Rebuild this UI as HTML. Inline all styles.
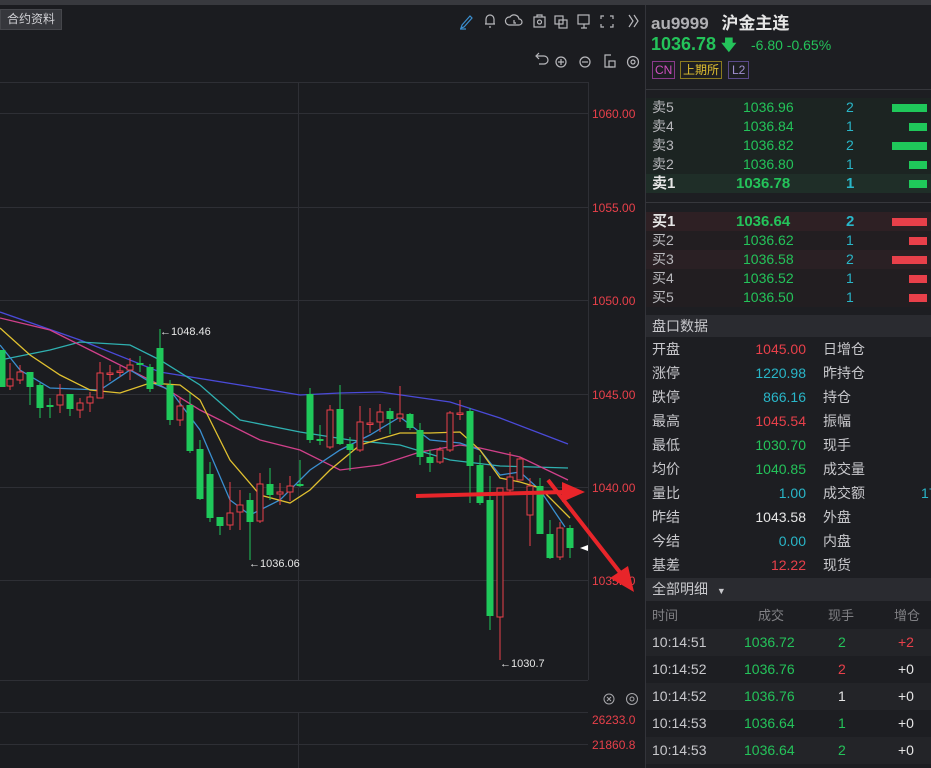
<!DOCTYPE html>
<html><head><meta charset="utf-8"><style>
*{margin:0;padding:0;box-sizing:border-box}
body{width:931px;height:768px;overflow:hidden;background:#1b1c20;font-family:"Liberation Sans","Noto Sans CJK SC",sans-serif;color:#c8c8cc;position:relative}
.a{position:absolute;white-space:nowrap}
.g{color:#24c35a}.r{color:#e8404a}.c{color:#29b6c8}.w{color:#e6e6e6}.gr{color:#b8b8bc}
#rp{position:absolute;left:645px;top:5px;width:286px;height:763px;background:#1d1e22;border-left:1px solid #33343a}
.row{position:absolute;left:0;width:286px;height:19px;font-size:14px;line-height:19px}
.row span{position:absolute}
.bar{position:absolute;height:8px;top:6px;right:5px}
.dr{position:absolute;left:0;width:286px;height:24px;font-size:14px;line-height:24px}
.dr span{position:absolute}
.tr{position:absolute;left:0;width:286px;height:27px;font-size:14px;line-height:27px}
.tr span{position:absolute}
</style></head><body>
<div class="a" style="left:0;top:0;width:931px;height:5px;background:#38393e"></div>
<div class="a" style="left:0;top:9px;width:62px;height:21px;background:#36373c;border:1px solid #45464b;font-size:12px;line-height:19px;padding-left:6px;color:#d0d0d4">合约资料</div>
<svg class="a" style="left:455px;top:5px" width="190" height="70" fill="none" stroke="#b8b8bc" stroke-width="1.2">
<path d="M7 20 L15 11 L17 13 L9 22 L6 23 Z M5 24 H11" stroke="#3a8fd0"/>
<path d="M31 19 V14 a4 4 0 0 1 8 0 V19 H30 H40 M34 22 h2"/>
<path d="M54 20 a4 4 0 0 1 1-8 a5 5 0 0 1 9 2 a3 3 0 0 1 0 6 Z M59 15 v3 h2"/>
<rect x="79" y="12" width="11" height="10"/><path d="M82 12 v-2 h5 v2"/><circle cx="84.5" cy="17" r="2"/>
<rect x="100" y="11" width="8" height="8"/><rect x="104" y="15" width="8" height="8"/>
<rect x="123" y="10" width="11" height="9"/><path d="M126 23 h6 M129 19 v4"/>
<path d="M146 14 v-3 h3 M155 11 h3 v3 M158 19 v3 h-3 M149 22 h-3 v-3"/>
<path d="M174 10 l4 6 l-4 6 M179 10 l4 6 l-4 6"/>
<path d="M84 59 h5 a4 4 0 0 0 0-8 h-7 M84 48 l-3 3 l3 3"/>
<circle cx="106" cy="57" r="5"/><path d="M103 57 h6 M106 54 v6"/>
<circle cx="130" cy="57" r="5"/><path d="M127 57 h6"/>
<path d="M158 62 h-8 v-12 h6"/><rect x="154" y="56" width="6" height="6"/>
<circle cx="178" cy="57" r="5.5"/><circle cx="178" cy="57" r="2"/>
</svg>
<svg class="a" style="left:0;top:0" width="645" height="768">
<g stroke="#2e2f35" stroke-width="1">
<line x1="0" y1="82.5" x2="588" y2="82.5"/>
<line x1="0" y1="113.5" x2="588" y2="113.5"/><line x1="0" y1="207.5" x2="588" y2="207.5"/><line x1="0" y1="300.5" x2="588" y2="300.5"/><line x1="0" y1="394.5" x2="588" y2="394.5"/><line x1="0" y1="487.5" x2="588" y2="487.5"/><line x1="0" y1="580.5" x2="588" y2="580.5"/>
<line x1="0" y1="680.5" x2="588" y2="680.5"/>
<line x1="298.5" y1="82" x2="298.5" y2="680"/>
<line x1="588.5" y1="82" x2="588.5" y2="680"/>
<line x1="0" y1="712.5" x2="588" y2="712.5"/><line x1="0" y1="744.5" x2="588" y2="744.5"/>
<line x1="298.5" y1="712" x2="298.5" y2="768"/>
</g>
<g font-size="12" fill="#e8404a" font-family="Liberation Sans">
<text x="592" y="118">1060.00</text><text x="592" y="212">1055.00</text><text x="592" y="305">1050.00</text><text x="592" y="399">1045.00</text><text x="592" y="492">1040.00</text><text x="592" y="585">1035.00</text>
<text x="592" y="724">26233.0</text><text x="592" y="749">21860.8</text>
</g>
<g fill="none" stroke="#a8a8ac" stroke-width="1"><circle cx="609" cy="699" r="5"/><path d="M607 697 l4 4 M611 697 l-4 4"/><circle cx="632" cy="699" r="5.5"/><circle cx="632" cy="699" r="2"/></g>
<g fill="none" stroke-width="1.3">
<polyline stroke="#4a4ad8" points="0,312 80,340 160,372 240,385 300,395 340,393 380,392 450,402 500,418 568,444"/>
<polyline stroke="#2fb0b0" points="0,360 50,350 80,342 130,345 160,360 200,385 240,420 300,432 350,440 400,445 450,460 500,466 568,468"/>
<polyline stroke="#d0408a" points="0,318 50,330 100,355 160,385 200,410 260,440 300,450 340,470 380,465 420,452 460,445 480,448 520,457 568,480"/>
<polyline stroke="#3a8fd0" points="0,345 20,370 50,388 100,390 130,370 150,382 170,390 200,430 230,500 250,515 280,500 310,470 340,450 370,435 400,417 430,440 460,443 480,450 500,475 520,472 540,490 565,527"/>
<polyline stroke="#e0c030" points="0,328 30,355 60,375 90,390 120,393 150,383 180,385 200,400 230,460 260,495 290,503 310,490 330,470 360,445 400,433 430,433 460,432 480,450 500,478 520,482 540,488 570,518"/>
</g>
<g id="cd"></g>
<g font-size="11" fill="#e6e6e6"><text x="160" y="335">←1048.46</text><text x="249" y="567">←1036.06</text><text x="500" y="667">←1030.7</text></g>
<polygon points="580,548 588,545 588,551" fill="#fff"/>
<g fill="#e8252a" stroke="#e8252a">
<line x1="416" y1="496" x2="565" y2="492" stroke-width="4"/>
<polygon points="562,482 585,492 562,502" stroke="none"/>
<line x1="548" y1="480" x2="622" y2="575" stroke-width="4"/>
<polygon points="610,578 634,592 628,566" stroke="none"/>
</g>
</svg>
<script>
var C=[[0,1,350,387,350,387],[8,0,379,386,363,390],[18,0,372,380,365,384],[28,1,372,387,372,405],[38,1,385,408,383,418],[48,1,405,407,398,418],[58,0,395,405,384,413],[68,1,394,409,394,416],[78,0,403,410,398,418],[88,0,397,403,392,412],[98,0,373,398,362,398],[108,0,373,374,365,381],[118,0,371,372,366,377],[128,0,365,370,358,380],[138,1,363,365,356,372],[148,1,367,389,364,392],[158,1,348,385,329,385],[168,1,385,420,380,425],[178,0,406,420,397,426],[188,1,405,451,393,453],[198,1,449,499,440,500],[208,1,474,518,462,522],[218,1,517,526,517,535],[228,0,513,525,482,530],[238,0,505,512,490,530],[248,1,500,522,493,560],[258,0,484,521,473,523],[268,1,484,495,468,500],[278,0,492,494,483,505],[288,0,486,492,476,501],[298,1,484,486,460,487],[308,1,394,440,388,443],[318,1,439,441,425,445],[328,0,410,447,405,449],[338,1,409,444,385,445],[348,1,444,450,437,471],[358,0,422,450,406,452],[368,0,423,424,408,433],[378,0,412,422,404,432],[388,1,411,419,408,434],[398,0,414,418,386,422],[408,1,414,428,413,430],[418,1,430,457,423,465],[428,1,457,463,450,472],[438,0,450,462,447,464],[448,0,413,450,411,452],[458,0,413,414,400,420],[468,1,411,466,408,503],[478,1,465,503,455,505],[488,1,500,616,476,630],[498,0,488,617,488,660],[508,0,477,490,452,493],[518,0,459,480,457,480],[528,0,486,515,478,546],[538,1,486,534,478,534],[548,1,534,558,520,559],[558,0,528,557,522,560],[568,1,528,548,525,558]];
var s='';C.forEach(function(c){var x=c[0]+2,col=c[1]?'#1fc85a':'#e8404a';s+='<line x1="'+x+'" y1="'+c[4]+'" x2="'+x+'" y2="'+c[5]+'" stroke="'+col+'"/>';var h=Math.max(c[3]-c[2],1.5);if(c[1])s+='<rect x="'+(x-3.5)+'" y="'+c[2]+'" width="7" height="'+h+'" fill="'+col+'"/>';else s+='<rect x="'+(x-3)+'" y="'+c[2]+'" width="6" height="'+h+'" fill="#1b1c20" stroke="'+col+'"/>';});
document.getElementById('cd').innerHTML=s;
</script>
<div id="rp">
<div class="a" style="left:5px;top:4px;font-size:17px;font-weight:bold;color:#b0b0b4">au9999 <span style="color:#e6e6e6;margin-left:8px">沪金主连</span></div>
<div class="a g" style="left:5px;top:29px;font-size:18px;font-weight:bold">1036.78 <span style="font-size:15px">🡇</span></div>
<div class="a g" style="left:105px;top:32px;font-size:14px">-6.80 -0.65%</div>
<div class="a" style="left:6px;top:56px;font-size:12px;line-height:16px;border:1px solid #8a3a8a;color:#d050c0;padding:0 2px">CN</div>
<div class="a" style="left:34px;top:56px;font-size:12px;line-height:16px;border:1px solid #8a7a20;color:#e0c030;padding:0 2px">上期所</div>
<div class="a" style="left:82px;top:56px;font-size:12px;line-height:16px;border:1px solid #5a4a8a;color:#a090d0;padding:0 3px">L2</div>
<div class="a" style="left:0;top:84px;width:286px;height:1px;background:#36373c"></div>
<div class="a" style="left:0;top:93px;width:286px;height:95px;background:#1c2422"></div>
<div class="a" style="left:0;top:169px;width:286px;height:19px;background:#1f2e28"></div>
<div class="row" style="top:93px"><span class="gr" style="left:6px">卖5</span><span class="g" style="left:97px">1036.96</span><span class="c" style="left:200px">2</span><div class="bar" style="width:35px;background:#1fc85a"></div></div>
<div class="row" style="top:112px"><span class="gr" style="left:6px">卖4</span><span class="g" style="left:97px">1036.84</span><span class="c" style="left:200px">1</span><div class="bar" style="width:18px;background:#1fc85a"></div></div>
<div class="row" style="top:131px"><span class="gr" style="left:6px">卖3</span><span class="g" style="left:97px">1036.82</span><span class="c" style="left:200px">2</span><div class="bar" style="width:35px;background:#1fc85a"></div></div>
<div class="row" style="top:150px"><span class="gr" style="left:6px">卖2</span><span class="g" style="left:97px">1036.80</span><span class="c" style="left:200px">1</span><div class="bar" style="width:18px;background:#1fc85a"></div></div>
<div class="row" style="top:169px;font-weight:bold;font-size:15px"><span class="w" style="left:6px">卖1</span><span class="g" style="left:90px">1036.78</span><span class="c" style="left:200px">1</span><div class="bar" style="width:18px;background:#1fc85a"></div></div>
<div class="a" style="left:0;top:197px;width:286px;height:1px;background:#36373c"></div>
<div class="a" style="left:0;top:207px;width:286px;height:95px;background:#221e21"></div>
<div class="a" style="left:0;top:207px;width:286px;height:19px;background:#2e2024"></div>
<div class="a" style="left:0;top:245px;width:286px;height:19px;background:#2a2024"></div>
<div class="row" style="top:207px;font-weight:bold;font-size:15px"><span class="w" style="left:6px">买1</span><span class="g" style="left:90px">1036.64</span><span class="c" style="left:200px">2</span><div class="bar" style="width:35px;background:#e8404a"></div></div>
<div class="row" style="top:226px"><span class="gr" style="left:6px">买2</span><span class="g" style="left:97px">1036.62</span><span class="c" style="left:200px">1</span><div class="bar" style="width:18px;background:#e8404a"></div></div>
<div class="row" style="top:245px"><span class="gr" style="left:6px">买3</span><span class="g" style="left:97px">1036.58</span><span class="c" style="left:200px">2</span><div class="bar" style="width:35px;background:#e8404a"></div></div>
<div class="row" style="top:264px"><span class="gr" style="left:6px">买4</span><span class="g" style="left:97px">1036.52</span><span class="c" style="left:200px">1</span><div class="bar" style="width:18px;background:#e8404a"></div></div>
<div class="row" style="top:283px"><span class="gr" style="left:6px">买5</span><span class="g" style="left:97px">1036.50</span><span class="c" style="left:200px">1</span><div class="bar" style="width:18px;background:#e8404a"></div></div>
<div class="a" style="left:0;top:310px;width:286px;height:22px;background:#2a2b30;font-size:14px;line-height:22px;padding-left:6px;color:#c8c8cc">盘口数据</div>
<div class="dr" style="top:332px"><span style="left:6px">开盘</span><span class="r" style="right:126px">1045.00</span><span style="left:177px">日增仓</span></div>
<div class="dr" style="top:356px"><span style="left:6px">涨停</span><span class="c" style="right:126px">1220.98</span><span style="left:177px">昨持仓</span></div>
<div class="dr" style="top:380px"><span style="left:6px">跌停</span><span class="c" style="right:126px">866.16</span><span style="left:177px">持仓</span></div>
<div class="dr" style="top:404px"><span style="left:6px">最高</span><span class="r" style="right:126px">1045.54</span><span style="left:177px">振幅</span></div>
<div class="dr" style="top:428px"><span style="left:6px">最低</span><span class="g" style="right:126px">1030.70</span><span style="left:177px">现手</span></div>
<div class="dr" style="top:452px"><span style="left:6px">均价</span><span class="g" style="right:126px">1040.85</span><span style="left:177px">成交量</span></div>
<div class="dr" style="top:476px"><span style="left:6px">量比</span><span class="c" style="right:126px">1.00</span><span style="left:177px">成交额</span><span class="c" style="left:275px">17</span></div>
<div class="dr" style="top:500px"><span style="left:6px">昨结</span><span class="w" style="right:126px">1043.58</span><span style="left:177px">外盘</span></div>
<div class="dr" style="top:524px"><span style="left:6px">今结</span><span class="c" style="right:126px">0.00</span><span style="left:177px">内盘</span></div>
<div class="dr" style="top:548px"><span style="left:6px">基差</span><span class="r" style="right:126px">12.22</span><span style="left:177px">现货</span></div>
<div class="a" style="left:0;top:573px;width:286px;height:23px;background:#2a2b30;font-size:14px;line-height:23px;padding-left:6px">全部明细 <span style="font-size:9px;margin-left:5px">▼</span></div>
<div class="tr" style="top:597px;font-size:13px;color:#808084"><span style="left:6px">时间</span><span style="left:112px">成交</span><span style="left:182px">现手</span><span style="left:248px">增仓</span></div>
<div class="a" style="left:0;top:624px;width:286px;height:27px;background:#232428"></div>
<div class="a" style="left:0;top:678px;width:286px;height:27px;background:#232428"></div>
<div class="a" style="left:0;top:732px;width:286px;height:27px;background:#232428"></div>
<div class="tr" style="top:624px"><span style="left:6px">10:14:51</span><span class="g" style="left:98px">1036.72</span><span class="g" style="left:192px">2</span><span class="r" style="left:252px">+2</span></div>
<div class="tr" style="top:651px"><span style="left:6px">10:14:52</span><span class="g" style="left:98px">1036.76</span><span class="r" style="left:192px">2</span><span class="w" style="left:252px">+0</span></div>
<div class="tr" style="top:678px"><span style="left:6px">10:14:52</span><span class="g" style="left:98px">1036.76</span><span class="w" style="left:192px">1</span><span class="w" style="left:252px">+0</span></div>
<div class="tr" style="top:705px"><span style="left:6px">10:14:53</span><span class="g" style="left:98px">1036.64</span><span class="g" style="left:192px">1</span><span class="w" style="left:252px">+0</span></div>
<div class="tr" style="top:732px"><span style="left:6px">10:14:53</span><span class="g" style="left:98px">1036.64</span><span class="g" style="left:192px">2</span><span class="w" style="left:252px">+0</span></div>
</div>
</body></html>
